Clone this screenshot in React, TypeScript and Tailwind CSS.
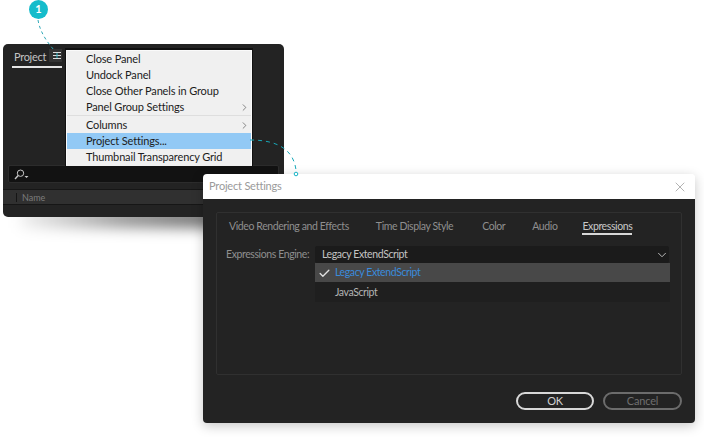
import { ChevronDown, ChevronRight, Check, X } from 'lucide-react'

const font = "font-['Lato',sans-serif]"

function MenuRow({ label, arrow, active }: { label: string; arrow?: boolean; active?: boolean }) {
  return (
    <div className={`flex h-4 items-center justify-between pl-[19px] pr-[1px] ${active ? 'bg-[#92c9f5]' : ''}`}>
      <span className="whitespace-nowrap">{label}</span>
      {arrow && <ChevronRight size={11} strokeWidth={1.5} className="text-[#555]" />}
    </div>
  )
}

function ProjectPanel() {
  return (
    <div className="absolute left-[3px] top-[44px] h-[173px] w-[281px] rounded-[5px] bg-[#232323]">
      {/* Tab */}
      <div className="ml-[9px] flex h-[24px] w-[50px] items-end border-b-2 border-[#e4e4e4] pb-[1px] pl-[2px] text-[11px] tracking-[-0.3px] text-[#c4c4c4]">
        Project
      </div>

      <div className="absolute left-[46px] top-[5px] flex h-[13px] w-[13px] items-center justify-end bg-[#333] pr-[1px]">
        <svg width="8" height="7" viewBox="0 0 8 7" fill="none" stroke="#dcdcdc">
          <path d="M0 .5h8M0 3.5h8M0 6.5h8" />
          <path d="M4 1v5" stroke="#2fb8c8" />
        </svg>
      </div>

      {/* Options menu */}
      <div className="absolute left-[62px] top-[4px] h-[118px] w-[188px] border-x border-t-2 border-[#111] bg-[#f0f0f0] text-[11px] tracking-[-0.15px] text-[#1c1c1c]">
        <div className="border-x border-t border-[#fafafa]">
          <div className="flex flex-col">
            <MenuRow label="Close Panel" />
            <MenuRow label="Undock Panel" />
            <MenuRow label="Close Other Panels in Group" />
            <MenuRow label="Panel Group Settings" arrow />
          </div>
          <div className="mb-[1px] border-t border-[#dedede]" />
          <MenuRow label="Columns" arrow />
          <MenuRow label="Project Settings..." active />
          <MenuRow label="Thumbnail Transparency Grid" />
        </div>
      </div>

      {/* Search */}
      <div className="mx-[5px] mt-[97px] flex h-[18px] items-center rounded-[2px] border border-[#2c2c2c] bg-[#121212] pl-[5px]">
        <svg width="15" height="11" viewBox="0 0 15 11" fill="none" stroke="#c8c8c8" strokeWidth="1">
          <circle cx="6.5" cy="4.2" r="3.2" />
          <path d="M4.2 6.6 1 10" strokeWidth="1.4" />
          <path d="M10.5 7h4l-2 2z" fill="#c8c8c8" stroke="none" />
        </svg>
      </div>

      {/* Column header */}
      <div className="mt-[6px] flex h-[16px] items-center gap-[5px] border-b border-t border-[#161616] bg-[#303030] pl-[13px] text-[9px] text-[#7c7c7c]">
        <span className="h-[9px] border-l border-[#151515]" />
        <span className="pt-[1px]">Name</span>
      </div>
    </div>
  )
}

function Tab({ label, active, className = '' }: { label: string; active?: boolean; className?: string }) {
  return (
    <span className={`h-[17px] whitespace-nowrap leading-[16px] ${active ? 'border-b-2 border-[#d8d8d8] text-[#c8c8c8]' : ''} ${className}`}>
      {label}
    </span>
  )
}

function SettingsDialog() {
  return (
    <div className="absolute left-[203px] top-[174px] flex h-[249px] w-[492px] flex-col overflow-hidden rounded-[4px] shadow-[0_3px_12px_rgba(0,0,0,0.22)]">
      <div className="flex h-[25px] shrink-0 items-center justify-between bg-white pl-[6px] pr-[7px] text-[11px] tracking-[-0.2px] text-[#9a9a9a]">
        <span>Project Settings</span>
        <X size={16} strokeWidth={1} className="text-[#8c8c8c]" />
      </div>

      <div className="flex flex-1 flex-col bg-[#232323] px-[13px] pb-[13px] pt-[13px]">
        <div className="h-[163px] rounded-[2px] border border-[#303030] px-[12px] pt-[5px] text-[10.5px] tracking-[-0.4px] text-[#8f8f8f]">
          <div className="flex gap-[27px]">
            <Tab label="Video Rendering and Effects" />
            <Tab label="Time Display Style" />
            <Tab label="Color" className="ml-[2px]" />
            <Tab label="Audio" />
            <Tab label="Expressions" active className="-ml-[2px]" />
          </div>

          <div className="relative -ml-[3px] mt-[11px] flex items-center">
            <span className="w-[89px] whitespace-nowrap">Expressions Engine:</span>
            <div className="flex h-[17px] w-[354px] items-center justify-between rounded-[2px] bg-[#1b1b1b] pl-[7px] text-[#c4c4c4]">
              <span>Legacy ExtendScript</span>
              <ChevronDown size={14} strokeWidth={1.6} className="text-[#c4c4c4]" />
            </div>

            {/* Open dropdown list */}
            <div className="absolute left-[89px] top-[17px] w-[355px] bg-[#1f1f1f]">
              <div className="flex h-[19px] items-center bg-[#484848] pt-[1px] text-[#3a8bdc]">
                <Check size={13} strokeWidth={2.5} className="ml-[3px] mr-[4px] text-[#e0e0e0]" />
                <span>Legacy ExtendScript</span>
              </div>
              <div className="flex h-[20px] items-center pl-[20px] pt-[2px] text-[#b4b4b4]">JavaScript</div>
            </div>
          </div>
        </div>

        <div className="mt-auto flex justify-end gap-[9px] text-[11px] tracking-[-0.2px]">
          <button className="h-[18px] w-[78px] rounded-full border-2 border-[#d8d8d8] leading-[14px] text-[#d0d0d0]">OK</button>
          <button className="h-[18px] w-[79px] rounded-full border-2 border-[#6c6c6c] leading-[14px] text-[#6f6f6f]">Cancel</button>
        </div>
      </div>
    </div>
  )
}

export default function App() {
  return (
    <div className={`relative h-[437px] w-[704px] overflow-hidden bg-white ${font}`}>
      {/* Soft drop shadow under the panel, fading out to the left */}
      <div className="absolute left-[20px] top-[208px] h-[20px] w-[210px] bg-linear-to-r from-black/5 via-black/40 to-black/60 blur-[7px]" />
      <ProjectPanel />
      <SettingsDialog />

      {/* Callout connectors */}
      <svg className="absolute left-0 top-0" width="704" height="437" fill="none">
        <path d="M38 20C40 32 47 42 54 50" stroke="#2fa9b8" strokeWidth="1" strokeDasharray="3 3" />
        <path d="M250 140C272 140 293 146 296 170" stroke="#17a8b8" strokeWidth="1" strokeDasharray="4 4" />
        <circle cx="296" cy="174" r="1.8" stroke="#17b4c6" strokeWidth="1" fill="white" />
      </svg>

      {/* Step badge */}
      <div className="absolute left-[29px] top-0 flex h-[19px] w-[19px] items-center justify-center rounded-full bg-[#15bccb] text-[11px] font-bold text-white">
        1
      </div>
    </div>
  )
}
